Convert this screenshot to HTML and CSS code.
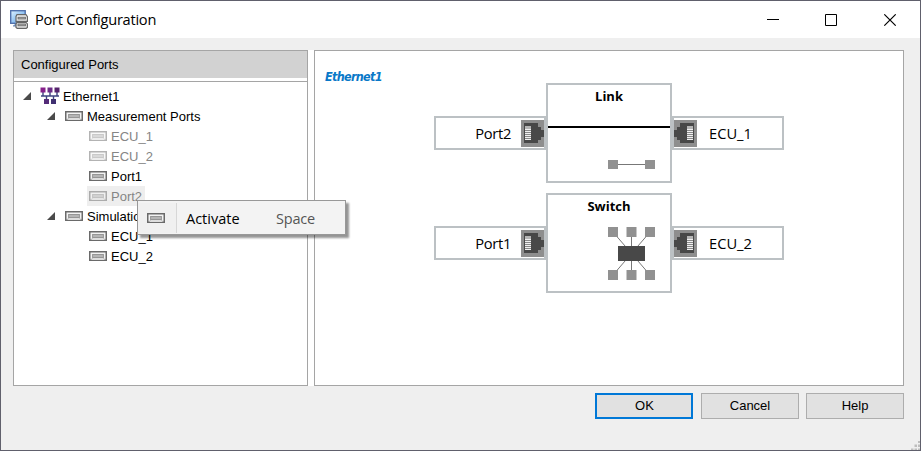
FILE: index.html
```html
<!DOCTYPE html>
<html lang="en">
<head>
<meta charset="utf-8">
<title>Port Configuration</title>
<link rel="stylesheet" href="styles.css">
</head>
<body>
<svg width="0" height="0" class="defs">
  <defs>
    <g id="port">
      <rect x=".75" y=".75" width="16.5" height="8.5" fill="#f2f2f2" stroke="#6a6a6a" stroke-width="1.5"/>
      <path d="M2 9L4 6.5H14L16 9" fill="#ddd" stroke="#b0b0b0" stroke-width=".8"/>
      <rect x="3.6" y="3.5" width="10.8" height="3" fill="#b5b5b5" stroke="#959595"/>
    </g>
    <g id="jack">
      <rect width="23" height="27" fill="#8e8e8e"/>
      <path d="M3 3H17V7H20V10H23V17H20V20H17V23H3Z" fill="#484848"/>
      <rect x="4" y="6" width="6" height="3" fill="#b5b5b5"/>
      <path d="M4 9.5h6M4 11.5h6M4 13.5h6M4 15.5h6M4 17.5h6M4 19.5h6" stroke="#f1f1f1"/>
      <path d="M4 10.5h6M4 12.5h6M4 14.5h6M4 16.5h6M4 18.5h6" stroke="#888"/>
    </g>
  </defs>
</svg>
<div class="window">
  <header class="titlebar">
    <svg class="app-icon" width="18" height="19" viewBox="0 0 18 19">
      <defs><linearGradient id="sky" x2="1" y2="1"><stop stop-color="#e0f3ff"/><stop offset="1" stop-color="#4e9ae8"/></linearGradient></defs>
      <rect x=".7" y=".7" width="14.5" height="12.6" fill="url(#sky)" stroke="#5272ad" stroke-width="1.4"/>
      <path d="M5 14h3v2H3" fill="#6d98d2" stroke="#6d84ac"/>
      <path d="M7 4.7h9l1.400 2v4.600H6V6.500Z" fill="#f1f1f1" stroke="#666" stroke-width="1.2"/>
      <rect x="8" y="7.2" width="7.5" height="1.8" fill="#aaa" stroke="#666" stroke-width=".8"/>
      <path d="M7 12.400h9l1.400 1.500v3.500l-1.200.9H7.200L6 17.400v-3.600Z" fill="#e5e5e5" stroke="#666" stroke-width="1.2"/>
      <rect x="8" y="14" width="7.5" height="1.8" fill="#aaa" stroke="#666" stroke-width=".8"/>
    </svg>
    <h1 class="title">Port Configuration</h1>
    <svg class="controls" width="131" height="12" viewBox="0 0 131 12" fill="none" stroke="#000">
      <path d="M0 5.500h12"/><path d="M58.500.500h11v11h-11z"/><path d="M117.300.300l11.400 11.400M128.700.300l-11.400 11.400" stroke-width="1.1"/>
    </svg>
  </header>
  <main class="panels">
    <section class="panel ports">
      <h2 class="panel-head">Configured Ports</h2>
      <div class="tree">
        <div class="row l1"><i class="arrow"></i><svg class="net" width="20" height="18" viewBox="0 0 20 18"><path d="M3 3v6M10 3v6M17 3v6M1 9h18M6.500 9v6M13.500 9v6" stroke="#3f4380" stroke-width="1.4"/><path d="M.500.500h5v5h-5z" fill="#86208a"/><path d="M7.500.500h5v5h-5z" fill="#6c2c86"/><path d="M14.500.500h5v5h-5z" fill="#56246d"/><path d="M4 12h5v5h-5z" fill="#542b78"/><path d="M11 12h5v5h-5z" fill="#403071"/></svg>Ethernet1</div>
        <div class="row l2"><i class="arrow"></i><svg class="port-icon"><use href="#port"/></svg>Measurement Ports</div>
        <div class="row l3 off"><svg class="port-icon"><use href="#port"/></svg>ECU_1</div>
        <div class="row l3 off"><svg class="port-icon"><use href="#port"/></svg>ECU_2</div>
        <div class="row l3"><svg class="port-icon"><use href="#port"/></svg>Port1</div>
        <div class="row l3 off selected"><svg class="port-icon"><use href="#port"/></svg>Port2</div>
        <div class="row l2"><i class="arrow"></i><svg class="port-icon"><use href="#port"/></svg>Simulation Ports</div>
        <div class="row l3"><svg class="port-icon"><use href="#port"/></svg>ECU_1</div>
        <div class="row l3"><svg class="port-icon"><use href="#port"/></svg>ECU_2</div>
      </div>
    </section>
    <section class="panel diagram">
      <h2 class="network">Ethernet1</h2>
      <div class="segments">
        <div class="segment">
          <div class="end left"><span>Port2</span><svg width="23" height="27"><use href="#jack"/></svg></div>
          <div class="device"><h3>Link</h3>
            <svg width="122" height="96" viewBox="548 85 122 96"><path d="M548 127h122" stroke="#000" stroke-width="2.2"/><path d="M613 164.500h37" stroke="#777"/><path d="M608 160h10v9h-10zM645 160h10v9h-10z" fill="#919191"/></svg>
          </div>
          <div class="end right"><svg width="23" height="27"><use href="#jack" transform="translate(23 0) scale(-1 1)"/></svg><span>ECU_1</span></div>
        </div>
        <div class="segment">
          <div class="end left"><span>Port1</span><svg width="23" height="27"><use href="#jack"/></svg></div>
          <div class="device"><h3>Switch</h3>
            <svg width="122" height="96" viewBox="548 195 122 96"><path d="M613 232l37 43M650 232l-37 43M631.500 232v43" stroke="#777"/><path d="M608 227h10v10h-10zM626.500 227h10v10h-10zM645 227h10v10h-10zM608 270h10v10h-10zM626.500 270h10v10h-10zM645 270h10v10h-10z" fill="#919191"/><path d="M618 246h27v15h-27z" fill="#484848"/></svg>
          </div>
          <div class="end right"><svg width="23" height="27"><use href="#jack" transform="translate(23 0) scale(-1 1)"/></svg><span>ECU_2</span></div>
        </div>
      </div>
    </section>
  </main>
  <footer class="buttons">
    <button class="button default">OK</button><button class="button">Cancel</button><button class="button">Help</button>
  </footer>
  <svg class="grip" width="9" height="9" fill="#bdbdbd"><path d="M7 0h2v2h-2zM3.500 3.500h2.500v2.500h-2.500zM7 3.500h2v2.500h-2zM0 7.500h2.500v1.500h-2.500zM3.500 7.500h2.500v1.500h-2.500zM7 7.500h2v1.500h-2z"/></svg>
  <div class="menu"><div class="gutter"><svg class="port-icon"><use href="#port"/></svg></div><span class="command">Activate</span><span class="shortcut">Space</span></div>
</div>
</body>
</html>
```
FILE: styles.css
```css
* { box-sizing: border-box; }
body { margin: 0; font: 13px "Liberation Sans", Arial, sans-serif; color: #000; overflow: hidden; }
h1, h2, h3 { margin: 0; font-weight: normal; }
svg { display: block; flex: none; }
.defs { position: absolute; }
.window { position: relative; width: 921px; height: 451px; border: 1px solid #60606c; background: #efefef; }
.titlebar { display: flex; align-items: center; height: 37px; padding: 0 22px 0 9px; background: #fff; }
.title { margin: -2px 0 0 7px; font: 14.6px "Open Sans", sans-serif; letter-spacing: -.25px; white-space: nowrap; }
.controls { margin-left: auto; }
.panels { display: flex; width: 891px; height: 336px; margin: 12px 0 0 12px; gap: 6px; background: #fff; }
.panel { border: 1px solid #a5a5a5; background: #fff; }
.ports { width: 295px; }
.diagram { width: 590px; }
.panel-head { height: 31px; padding: 1px 0 0 7px; font-size: 13px; line-height: 26px; background: linear-gradient(#d2d2d2 27px, #fff 27px); border-bottom: 1px solid #a5a5a5; }
.tree { padding-top: 4px; }
.row { display: flex; align-items: center; width: max-content; height: 20px; white-space: nowrap; }
.l1 { padding-left: 9px; }
.l2 { padding-left: 33px; }
.l3 { margin-left: 73px; padding: 0 3px 0 2px; }
.arrow { width: 8px; height: 8px; background: #4a4a4a; clip-path: polygon(100% 0, 100% 100%, 0 100%); }
.net { margin: 0 3px 0 9px; }
.port-icon { width: 18px; height: 10px; }
.row .port-icon { margin: -1px 4px 0 0; }
.row.l2 .port-icon { margin: -1px 4px 0 10px; }
.off { color: #858585; }
.off .port-icon { opacity: .5; }
.selected { background: #eee; }
.network { padding: 17px 0 0 10px; font: italic bold 12.5px/17px "DejaVu Sans Condensed", sans-serif; color: #0878c8; letter-spacing: -.7px; }
.segments { display: flex; flex-direction: column; gap: 10px; width: 350px; margin: -2px 0 0 119px; }
.segment { display: flex; align-items: center; height: 100px; }
.end, .device { border: 2px solid #bcc1c4; background: #fff; }
.end { display: flex; align-items: center; height: 34px; font: 14.7px "Open Sans", sans-serif; }
.left { width: 112px; justify-content: flex-end; gap: 10px; }
.left span { letter-spacing: -.3px; }
.right { width: 112px; gap: 12px; }
.device { position: relative; width: 126px; height: 100px; }
.device h3 { position: absolute; inset: 2px 0 auto; font: bold 13px/18px "Open Sans", sans-serif; text-align: center; }
.buttons { display: flex; margin: 7px 16px 0 594px; }
.button { width: 98px; height: 26px; padding: 0 0 2px; font: 13px "Liberation Sans", Arial, sans-serif; color: #000; background: #e1e1e1; border: 1px solid #adadad; }
.button.default { border: 2px solid #0078d7; padding-left: 1px; }
.button + .button { margin-left: 8px; }
.button + .button:last-child { margin-left: 7px; }
.grip { position: absolute; right: 0; bottom: 0; }
.menu { position: absolute; left: 136px; top: 199px; display: flex; align-items: center; width: 209px; height: 35px; border: 1px solid #989898; background: #f3f3f3; box-shadow: 3px 3px 2px rgba(0,0,0,.42); font: 14.5px "Open Sans", sans-serif; }
.menu span { padding-top: 2px; }
.gutter { display: flex; align-items: center; width: 39px; height: 30px; padding-left: 9px; background: #f0f0f0; border-right: 1px solid #d7d7d7; }
.command { width: 99px; padding-left: 9px; }
.shortcut { color: #555; letter-spacing: -.2px; }
```
